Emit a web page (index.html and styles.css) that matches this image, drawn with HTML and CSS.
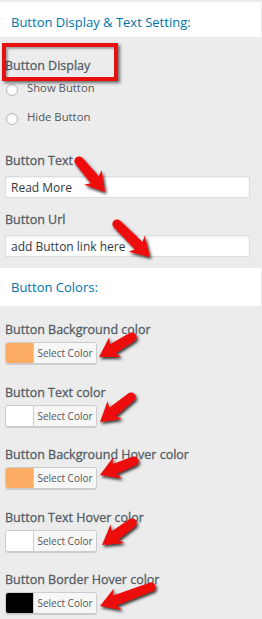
FILE: index.html
```html
<!DOCTYPE html>
<html>
<head>
<meta charset="utf-8">
<link rel="stylesheet" href="styles.css">
</head>
<body>
<div class="panel">
  <div class="section-head">Button Display &amp; Text Setting:</div>
  <div class="section-body display">
    <div class="label">Button Display</div>
    <label class="radio first"><span class="dot"></span>Show Button</label>
    <label class="radio second"><span class="dot"></span>Hide Button</label>
    <div class="label gap-lg">Button Text</div>
    <input class="text-input" type="text" value="Read More">
    <div class="label gap-md">Button Url</div>
    <input class="text-input" type="text" value="add Button link here">
  </div>
  <div class="section-head colors">Button Colors:</div>
  <div class="section-body colors-body">
    <div class="color-field">
      <div class="label">Button Background color</div>
      <div class="picker"><span class="swatch orange"></span><span class="pick-text">Select Color</span></div>
    </div>
    <div class="color-field">
      <div class="label">Button Text color</div>
      <div class="picker"><span class="swatch white"></span><span class="pick-text">Select Color</span></div>
    </div>
    <div class="color-field">
      <div class="label">Button Background Hover color</div>
      <div class="picker"><span class="swatch orange"></span><span class="pick-text">Select Color</span></div>
    </div>
    <div class="color-field">
      <div class="label">Button Text Hover color</div>
      <div class="picker"><span class="swatch white"></span><span class="pick-text">Select Color</span></div>
    </div>
    <div class="color-field">
      <div class="label">Button Border Hover color</div>
      <div class="picker"><span class="swatch black"></span><span class="pick-text">Select Color</span></div>
    </div>
  </div>

  <div class="highlight"></div>

  <svg class="arrows" viewBox="0 0 262 619" xmlns="http://www.w3.org/2000/svg">
    <defs>
      <filter id="sh" x="-20%" y="-20%" width="140%" height="140%">
        <feDropShadow dx="1.5" dy="2" stdDeviation="1.4" flood-color="#000" flood-opacity="0.8"/>
      </filter>
    </defs>
    <g filter="url(#sh)" fill="#ee0a0a">
      <path transform="translate(79,161) rotate(50)" d="M0,-4.6 L24.5,-5.3 L21.5,-11.5 L40.5,0 L21.5,11.5 L24.5,5.3 L0,4.6 A4.6,4.6 0 0 1 0,-4.6Z"/>
      <path transform="translate(117,224) rotate(45)" d="M0,-4.6 L30.7,-5.3 L27.7,-11.5 L46.7,0 L27.7,11.5 L30.7,5.3 L0,4.6 A4.6,4.6 0 0 1 0,-4.6Z"/>
      <path transform="translate(132,337) rotate(148.8)" d="M0,-4.6 L22.6,-5.3 L19.6,-11.5 L38.6,0 L19.6,11.5 L22.6,5.3 L0,4.6 A4.6,4.6 0 0 1 0,-4.6Z"/>
      <path transform="translate(131,397) rotate(141.1)" d="M0,-4.6 L23.8,-5.3 L20.8,-11.5 L39.8,0 L20.8,11.5 L23.8,5.3 L0,4.6 A4.6,4.6 0 0 1 0,-4.6Z"/>
      <path transform="translate(134,461) rotate(157.6)" d="M0,-4.6 L20.8,-5.3 L17.8,-11.5 L36.8,0 L17.8,11.5 L20.8,5.3 L0,4.6 A4.6,4.6 0 0 1 0,-4.6Z"/>
      <path transform="translate(132,523) rotate(143.7)" d="M0,-4.6 L21.2,-5.3 L18.2,-11.5 L37.2,0 L18.2,11.5 L21.2,5.3 L0,4.6 A4.6,4.6 0 0 1 0,-4.6Z"/>
      <path transform="translate(151,587) rotate(159.6)" d="M0,-4.6 L38.4,-5.3 L35.4,-11.5 L54.4,0 L35.4,11.5 L38.4,5.3 L0,4.6 A4.6,4.6 0 0 1 0,-4.6Z"/>
    </g>
  </svg>
</div>
</body>
</html>
```
FILE: styles.css
```css
html, body {
  margin: 0;
  padding: 0;
  background: #ececec;
}

body {
  font-family: "Open Sans", "Noto Sans", sans-serif;
}

.panel {
  position: relative;
  width: 262px;
  height: 619px;
  padding-top: 2px;
  box-sizing: border-box;
  overflow: hidden;
}

.section-head {
  background: #fff;
  margin-right: 1px;
  height: 35px;
  box-sizing: border-box;
  padding: 12px 0 0 11px;
  font-size: 13px;
  line-height: 16px;
  color: #0073aa;
}

.section-head.colors {
  height: 38px;
  padding-top: 11px;
}

.display {
  padding: 21px 0 11px 0;
}

.label {
  font-size: 12.5px;
  font-weight: 400;
  line-height: 16px;
  color: #555d66;
  -webkit-text-stroke: 0.3px #555d66;
  padding-left: 5px;
}

.label.gap-lg {
  margin-top: 28px;
}

.label.gap-md {
  margin-top: 14px;
}

.radio {
  display: flex;
  align-items: center;
  height: 16px;
  font-size: 11.3px;
  line-height: 16px;
  color: #555;
}

.radio.first {
  margin-top: 6px;
}

.radio.second {
  margin-top: 13px;
}

.dot {
  width: 12px;
  height: 12px;
  box-sizing: border-box;
  border: 1px solid #b4b9be;
  border-radius: 50%;
  background: #fff;
  box-shadow: inset 0 1px 2px rgba(0, 0, 0, 0.08);
  margin: 3px 9px 0 6px;
}

.text-input {
  display: block;
  margin: 7px 0 0 5px;
  width: 245px;
  height: 22px;
  box-sizing: border-box;
  border: 1px solid #ddd;
  background: #fff;
  padding: 0 5px;
  font-family: "Open Sans", "Noto Sans", sans-serif;
  font-size: 12px;
  color: #32373c;
  box-shadow: inset 0 1px 2px rgba(0, 0, 0, 0.07);
  outline: none;
}

.colors-body {
  padding: 16px 0 0 0;
}

.color-field + .color-field {
  margin-top: 20.5px;
}

.color-field .label {
  margin-bottom: 4px;
}

.picker {
  display: flex;
  margin-left: 5px;
  width: 92px;
  height: 22px;
  box-sizing: border-box;
  border: 1px solid #ccc;
  border-radius: 3px;
  box-shadow: 0 1px 0 #ccc;
  overflow: hidden;
}

.swatch {
  width: 27px;
  flex: none;
}

.swatch.orange { background: #fdac64; }
.swatch.white { background: #fff; }
.swatch.black { background: #000; }

.pick-text {
  flex: 1;
  background: #f7f7f7;
  border-left: 1px solid #ccc;
  font-size: 10px;
  line-height: 20px;
  color: #555;
  text-align: center;
}

.highlight {
  position: absolute;
  left: 2px;
  top: 43px;
  width: 116px;
  height: 38px;
  box-sizing: border-box;
  border: 4px solid #e8100e;
  box-shadow: 2px 2px 3px rgba(0, 0, 0, 0.55), inset 2px 2px 2px rgba(0, 0, 0, 0.3);
}

.arrows {
  position: absolute;
  left: 0;
  top: 0;
  width: 262px;
  height: 619px;
  pointer-events: none;
}
```
